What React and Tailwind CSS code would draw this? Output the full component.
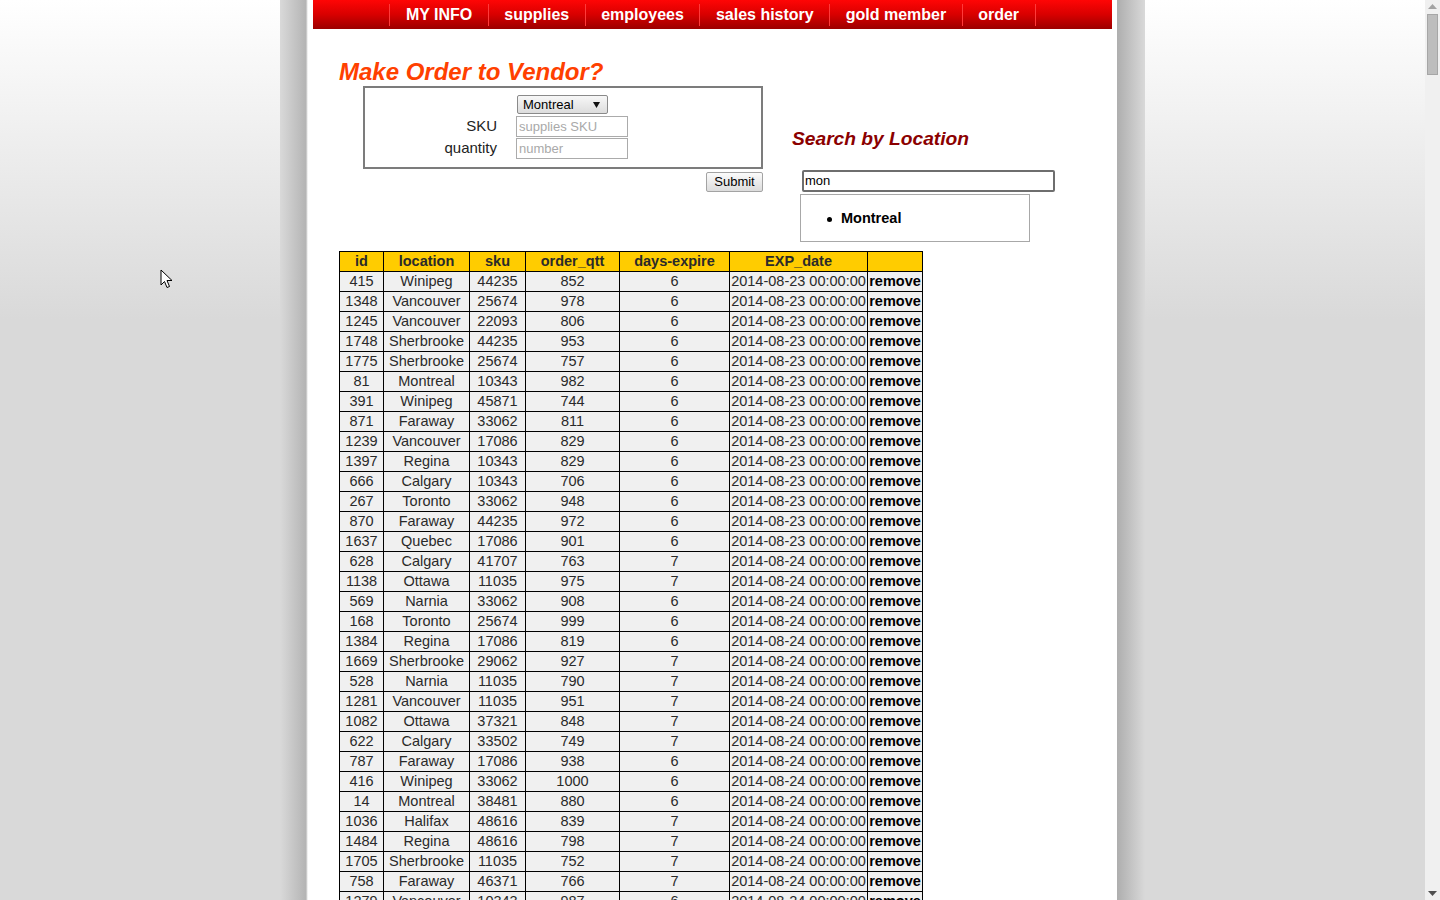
import React from 'react'

const navItems = ['MY INFO', 'supplies', 'employees', 'sales history', 'gold member', 'order'];

const columns = [
    { label: 'id', width: 'w-[44px]' },
    { label: 'location', width: 'w-[86px]' },
    { label: 'sku', width: 'w-[56px]' },
    { label: 'order_qtt', width: 'w-[94px]' },
    { label: 'days-expire', width: 'w-[110px]' },
    { label: 'EXP_date', width: 'w-[138px]' },
    { label: '', width: 'w-[55px]' },
];

const orders = [
    [415, 'Winipeg', 44235, 852, 6, '2014-08-23 00:00:00'],
    [1348, 'Vancouver', 25674, 978, 6, '2014-08-23 00:00:00'],
    [1245, 'Vancouver', 22093, 806, 6, '2014-08-23 00:00:00'],
    [1748, 'Sherbrooke', 44235, 953, 6, '2014-08-23 00:00:00'],
    [1775, 'Sherbrooke', 25674, 757, 6, '2014-08-23 00:00:00'],
    [81, 'Montreal', 10343, 982, 6, '2014-08-23 00:00:00'],
    [391, 'Winipeg', 45871, 744, 6, '2014-08-23 00:00:00'],
    [871, 'Faraway', 33062, 811, 6, '2014-08-23 00:00:00'],
    [1239, 'Vancouver', 17086, 829, 6, '2014-08-23 00:00:00'],
    [1397, 'Regina', 10343, 829, 6, '2014-08-23 00:00:00'],
    [666, 'Calgary', 10343, 706, 6, '2014-08-23 00:00:00'],
    [267, 'Toronto', 33062, 948, 6, '2014-08-23 00:00:00'],
    [870, 'Faraway', 44235, 972, 6, '2014-08-23 00:00:00'],
    [1637, 'Quebec', 17086, 901, 6, '2014-08-23 00:00:00'],
    [628, 'Calgary', 41707, 763, 7, '2014-08-24 00:00:00'],
    [1138, 'Ottawa', 11035, 975, 7, '2014-08-24 00:00:00'],
    [569, 'Narnia', 33062, 908, 6, '2014-08-24 00:00:00'],
    [168, 'Toronto', 25674, 999, 6, '2014-08-24 00:00:00'],
    [1384, 'Regina', 17086, 819, 6, '2014-08-24 00:00:00'],
    [1669, 'Sherbrooke', 29062, 927, 7, '2014-08-24 00:00:00'],
    [528, 'Narnia', 11035, 790, 7, '2014-08-24 00:00:00'],
    [1281, 'Vancouver', 11035, 951, 7, '2014-08-24 00:00:00'],
    [1082, 'Ottawa', 37321, 848, 7, '2014-08-24 00:00:00'],
    [622, 'Calgary', 33502, 749, 7, '2014-08-24 00:00:00'],
    [787, 'Faraway', 17086, 938, 6, '2014-08-24 00:00:00'],
    [416, 'Winipeg', 33062, 1000, 6, '2014-08-24 00:00:00'],
    [14, 'Montreal', 38481, 880, 6, '2014-08-24 00:00:00'],
    [1036, 'Halifax', 48616, 839, 7, '2014-08-24 00:00:00'],
    [1484, 'Regina', 48616, 798, 7, '2014-08-24 00:00:00'],
    [1705, 'Sherbrooke', 11035, 752, 7, '2014-08-24 00:00:00'],
    [758, 'Faraway', 46371, 766, 7, '2014-08-24 00:00:00'],
    [1279, 'Vancouver', 10343, 987, 6, '2014-08-24 00:00:00'],
];

const cities = ['Winipeg', 'Vancouver', 'Sherbrooke', 'Montreal', 'Faraway', 'Calgary', 'Toronto', 'Quebec', 'Ottawa', 'Narnia', 'Regina', 'Halifax'];
const skus = [44235, 25674, 22093, 10343, 45871, 33062, 17086, 41707, 11035, 29062, 37321, 33502, 38481, 48616, 46371];

// the rest of the (long) order list, seeded so it's the same every load
const moreOrders = (() => {
    let seed = 12345;
    const rnd = (n) => {
        seed = (seed * 16807) % 2147483647;
        return seed % n;
    };
    const pad = (n) => String(n).padStart(2, '0');
    const rows = [];
    for (let i = 0; i < 300; i++) {
        const d = new Date(2014, 7, 24 + Math.floor((i + 18) / 36));
        const date = `${d.getFullYear()}-${pad(d.getMonth() + 1)}-${pad(d.getDate())} 00:00:00`;
        rows.push([
            1 + rnd(1800),
            cities[rnd(cities.length)],
            skus[rnd(skus.length)],
            700 + rnd(301),
            6 + Math.floor((i + 18) / 36) + rnd(2),
            date,
        ]);
    }
    return rows;
})();

const allOrders = [...orders, ...moreOrders];

// window scrollbar as it shows in the screenshot
const ScrollBar = () => (
    <div className="fixed top-0 right-0 w-[15px] h-screen bg-[#f0f0f0] flex flex-col items-center pointer-events-none">
        <svg className="mt-[4px]" width="9" height="5" viewBox="0 0 9 5"><polygon points="0,5 9,5 4.5,0" fill="#a3a3a3" /></svg>
        <div className="mt-[5px] w-[11px] h-[61px] bg-[#bdbdbd] border border-[#a6a6a6]"></div>
        <div className="flex-1"></div>
        <svg className="mb-[4px]" width="9" height="5" viewBox="0 0 9 5"><polygon points="0,0 9,0 4.5,5" fill="#505050" /></svg>
    </div>
);

const App = () => {
    return (
        <div className="relative min-h-screen pr-[15px] bg-[linear-gradient(to_bottom,#ffffff_0px,#d9d9d9_320px)] font-['Liberation_Sans',Arial,sans-serif] text-[#2a2a2a]">

            <div className="mx-auto w-[865px] px-[28px] bg-[linear-gradient(to_right,#d9d9d9_0px,#b4b4b4_26px,#e0e0e0_27px,#ffffff_28px,#ffffff_837px,#aeaeae_837px,#d9d9d9_865px)]">
                <div className="bg-white pb-[40px]">

                    {/* Top menu */}
                    <nav className="mx-[5px] h-[29px] flex justify-center bg-[linear-gradient(to_bottom,#ff0505,#d80000_50%,#9c0000)]">
                        <ul className="flex mt-[4px] h-[22px] border-r border-[#ff3a3a]">
                            {navItems.map((item) => (
                                <li key={item} className="border-l border-[#ff3a3a] px-[15.5px] text-white font-bold text-[16px] leading-[21px] cursor-pointer">
                                    {item}
                                </li>
                            ))}
                        </ul>
                    </nav>

                    <div className="flex pl-[31px] pt-[29px]">

                        {/* Order form */}
                        <div className="w-[424px] shrink-0">
                            <h2 className="text-[24px] leading-[28px] font-bold italic text-[#ff4000]">Make Order to Vendor?</h2>

                            <div className="ml-[24px] w-[400px] h-[83px] border-2 border-[#7c7c7c]">
                                <div className="flex mt-[7px] h-[18px]">
                                    <div className="w-[151px]"></div>
                                    <div className="ml-[1px] w-[91px] h-[19px] flex items-center justify-between pl-[5px] pr-[7px] border border-[#8a8a8a] rounded-[2px] bg-[linear-gradient(to_bottom,#f7f7f7,#dddddd)] text-[13px] text-black">
                                        <span>Montreal</span>
                                        <svg width="7" height="6" viewBox="0 0 7 6"><polygon points="0,0 7,0 3.5,6" fill="#111" /></svg>
                                    </div>
                                </div>
                                <div className="flex items-center mt-[3px] h-[21px]">
                                    <label className="w-[132px] text-right text-[15px] text-[#222]">SKU</label>
                                    <input className="ml-[19px] w-[112px] h-[21px] border border-[#ababab] px-[2px] text-[13px] placeholder:text-[#a9a9a9] outline-none" placeholder="supplies SKU" />
                                </div>
                                <div className="flex items-center mt-[1px] h-[21px]">
                                    <label className="w-[132px] text-right text-[15px] text-[#222]">quantity</label>
                                    <input className="ml-[19px] w-[112px] h-[21px] border border-[#ababab] px-[2px] text-[13px] placeholder:text-[#a9a9a9] outline-none" placeholder="number" />
                                </div>
                            </div>

                            <div className="ml-[24px] w-[400px] flex justify-end mt-[3px]">
                                <button className="w-[57px] h-[20px] border border-[#a3a3a3] rounded-[2px] bg-[linear-gradient(to_bottom,#fbfbfb,#dcdcdc)] text-[13px] text-black leading-[18px]">
                                    Submit
                                </button>
                            </div>
                        </div>

                        {/* Location search */}
                        <div className="ml-[29px] pt-[70px]">
                            <h3 className="text-[19.2px] leading-[22px] font-bold italic text-[#8b0000]">Search by Location</h3>
                            <div className="ml-[10px] mt-[20px] w-[253px] h-[22px] border-2 border-[#6e6e6e] rounded-[2px] flex items-center px-[1px] text-[13px] text-black">
                                mon
                            </div>
                            <div className="ml-[8px] mt-[2px] w-[230px] h-[48px] pt-[2px] border border-[#a8a8a8] flex items-center">
                                <span className="ml-[26px] mr-[9px] w-[5px] h-[5px] rounded-full bg-black"></span>
                                <span className="text-[14.5px] font-bold text-black">Montreal</span>
                            </div>
                        </div>
                    </div>

                    {/* Orders table */}
                    <div className="pl-[31px] mt-[9px]">
                        <table className="table-fixed border-collapse w-[582px] text-[14.5px] leading-[19px] text-center">
                            <colgroup>
                                {columns.map((c, i) => <col key={i} className={c.width} />)}
                            </colgroup>
                            <thead>
                                <tr className="bg-[#ffcc00]">
                                    {columns.map((c, i) => (
                                        <th key={i} className="border border-black p-0 font-bold text-[#2a2a2a]">{c.label}</th>
                                    ))}
                                </tr>
                            </thead>
                            <tbody>
                                {allOrders.map((row, r) => (
                                    <tr key={r} className="bg-[#f0f0f0]">
                                        {row.map((cell, i) => (
                                            <td key={i} className="border border-black p-0 whitespace-nowrap">{cell}</td>
                                        ))}
                                        <td className="border border-black p-0 font-bold text-black cursor-pointer">remove</td>
                                    </tr>
                                ))}
                            </tbody>
                        </table>
                    </div>

                </div>
            </div>

            <ScrollBar />

            {/* mouse pointer caught in the screenshot */}
            <svg className="fixed left-[160px] top-[269px] pointer-events-none" width="14" height="21" viewBox="0 0 14 21">
                <path d="M1 1 L1 16 L4.5 12.5 L7 18.5 L9.5 17.5 L7 11.5 L12 11.5 Z" fill="#fff" stroke="#000" strokeWidth="1" strokeLinejoin="round" />
            </svg>
        </div>
    )
}

export default App
